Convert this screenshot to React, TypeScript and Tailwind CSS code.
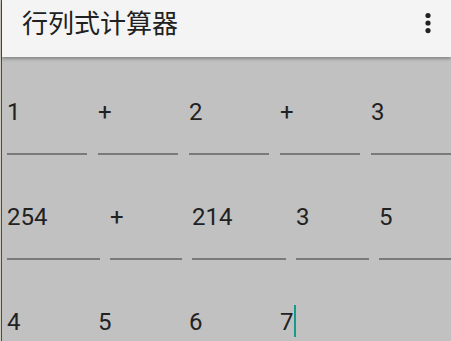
import React from 'react';

type Cell = { text: string; width: number; caret?: boolean };

const rows: Cell[][] = [
  [
    { text: '1', width: 80 },
    { text: '+', width: 80 },
    { text: '2', width: 80 },
    { text: '+', width: 80 },
    { text: '3', width: 80 },
  ],
  [
    { text: '254', width: 93 },
    { text: '+', width: 72 },
    { text: '214', width: 94 },
    { text: '3', width: 73 },
    { text: '5', width: 80 },
  ],
  [
    { text: '4', width: 80 },
    { text: '5', width: 80 },
    { text: '6', width: 80 },
    { text: '7', width: 80, caret: true },
    { text: '', width: 80 },
  ],
];

const gaps = ['gap-[11px]', 'gap-[10px]', 'gap-[11px]'];

const MoreIcon: React.FC = () => (
  <svg width="10" height="24" viewBox="0 0 10 24" className="text-[#222]">
    <circle cx="5" cy="4.5" r="2.6" fill="currentColor" />
    <circle cx="5" cy="12" r="2.6" fill="currentColor" />
    <circle cx="5" cy="19.6" r="2.6" fill="currentColor" />
  </svg>
);

const Field: React.FC<{ cell: Cell }> = ({ cell }) => (
  <div className="shrink-0 flex flex-col" style={{ width: cell.width }}>
    <div className="flex items-start h-[28px]">
      <span className="text-[24px] leading-[28px] text-[#222] font-['Roboto',sans-serif]">{cell.text}</span>
      {cell.caret && <span className="-mt-[3px] w-[2px] h-[32px] bg-[#139c89]" />}
    </div>
    <div className="mt-[27px] h-[2px] bg-[#7a7a7a]" />
  </div>
);

const App: React.FC = () => {
  return (
    <div className="flex h-screen w-full overflow-hidden bg-[#c1c1c1]">
      {/* left window edge */}
      <div className="w-[1px] shrink-0 bg-[#cfcbbf]" />
      <div className="w-[1px] shrink-0 bg-[#4a4a4a]" />

      <div className="flex-1 min-w-0 flex flex-col">
        {/* App bar */}
        <header className="relative z-10 h-[57px] shrink-0 flex items-start justify-between pt-[6px] pl-[20px] pr-[16px] bg-[#f4f4f4] shadow-[0_2px_3px_rgba(0,0,0,0.3)]">
          <h1 className="text-[26px] leading-[32px] text-[#212121] font-['Noto_Sans_CJK_SC',sans-serif]">
            行列式计算器
          </h1>
          <div className="pt-[5px] pr-[2px]">
            <MoreIcon />
          </div>
        </header>

        {/* Matrix rows */}
        <main className="flex flex-col gap-[48px] pt-[41px] pl-[5px]">
          {rows.map((row, i) => (
            <div key={i} className={`flex ${gaps[i]}`}>
              {row.map((cell, j) => (
                <Field key={j} cell={cell} />
              ))}
            </div>
          ))}
        </main>
      </div>
    </div>
  );
};

export default App;
